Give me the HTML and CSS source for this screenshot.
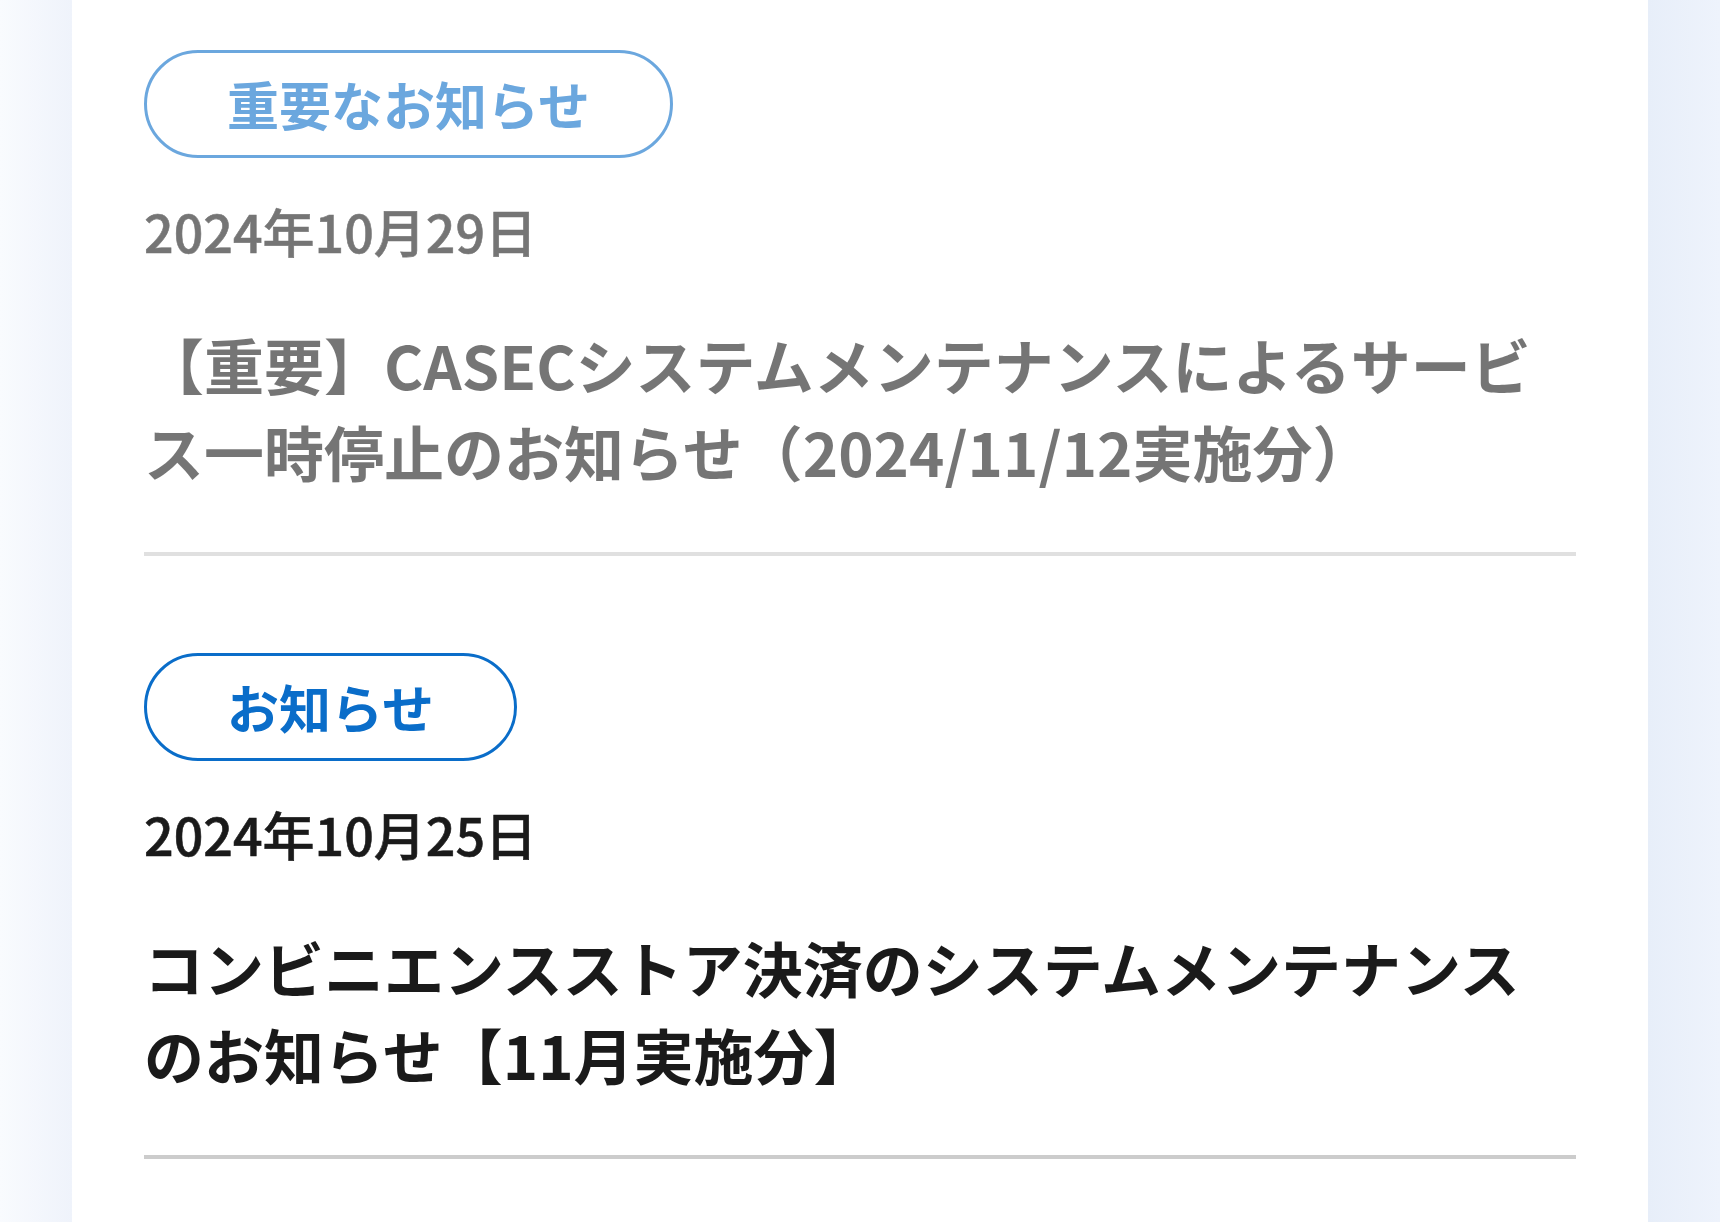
FILE: index.html
```html
<!DOCTYPE html>
<html lang="ja">
<head>
<meta charset="utf-8">
<title>お知らせ一覧</title>
<link rel="stylesheet" href="styles.css">
</head>
<body>
  <main class="sheet">
    <ul class="news-list">
      <li class="news-item is-read">
        <a class="news-link" href="#">
          <span class="tag">重要なお知らせ</span>
          <time class="news-date" datetime="2024-10-29">2024年10月29日</time>
          <p class="news-title">【重要】CASECシステムメンテナンスによるサービス一時停止のお知らせ（2024/11/12実施分）</p>
        </a>
      </li>
      <li class="news-item">
        <a class="news-link" href="#">
          <span class="tag">お知らせ</span>
          <time class="news-date" datetime="2024-10-25">2024年10月25日</time>
          <p class="news-title">コンビニエンスストア決済のシステムメンテナンスのお知らせ【11月実施分】</p>
        </a>
      </li>
    </ul>
  </main>
</body>
</html>
```

FILE: styles.css
```css
html, body {
  margin: 0;
  padding: 0;
}

body {
  min-height: 100vh;
  font-family: "Noto Sans CJK JP", "Noto Sans", sans-serif;
  color: #1a1a1a;
  background: linear-gradient(90deg,
    #f9fbfe 0%,
    #eff3fb 4.19%,
    #ffffff 4.2%,
    #ffffff 95.8%,
    #e7eef9 95.81%,
    #eef3fc 100%);
}

.sheet {
  width: 1576px;
  min-height: 100vh;
  margin: 0 auto;
  box-sizing: border-box;
  padding: 50px 72px 0;
  background: #ffffff;
}

.news-list {
  list-style: none;
  margin: 0;
  padding: 0;
}

.news-item {
  margin-bottom: 97px;
}

/* already-read entries are faded out */
.news-item.is-read {
  opacity: 0.6;
}

.news-link {
  display: flex;
  flex-direction: column;
  align-items: flex-start;
  padding-bottom: 58px;
  border-bottom: 4px solid #cccccc;
  color: inherit;
  text-decoration: none;
}

.tag {
  display: inline-block;
  padding: 12px 80px;
  border: 3px solid #0a6dc9;
  border-radius: 999px;
  color: #0a6dc9;
  font-size: 52px;
  font-weight: 700;
  line-height: 78px;
  white-space: nowrap;
}

.news-date {
  margin-top: 34px;
  font-size: 52px;
  font-weight: 500;
  line-height: 78px;
  color: #1a1a1a;
  -webkit-text-stroke: 0.6px currentColor;
}

.news-title {
  margin: 50px 0 0;
  font-size: 60px;
  font-weight: 700;
  line-height: 87px;
  color: #1a1a1a;
}
```
